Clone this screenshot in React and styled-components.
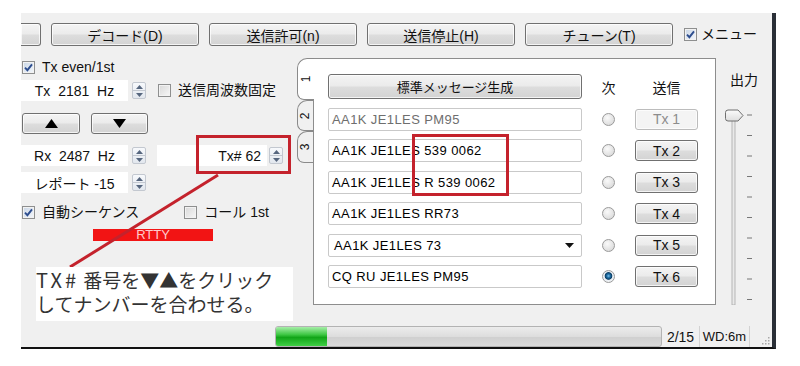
import React from "react";
import styled, { createGlobalStyle } from "styled-components";

const UI_FONT = `"Liberation Sans", "Noto Sans CJK JP", sans-serif`;

const GlobalStyle = createGlobalStyle`
  html, body { margin: 0; padding: 0; background: #fff; }
  body { font-family: ${UI_FONT}; font-size: 14px; color: #111; }
`;

const MESSAGES = [
  { text: "AA1K JE1LES PM95", tx: "Tx 1", dim: true },
  { text: "AA1K JE1LES 539 0062", tx: "Tx 2" },
  { text: "AA1K JE1LES R 539 0062", tx: "Tx 3" },
  { text: "AA1K JE1LES RR73", tx: "Tx 4" },
  { text: "AA1K JE1LES 73", tx: "Tx 5", combo: true },
  { text: "CQ RU JE1LES PM95", tx: "Tx 6", selected: true },
];

const PROGRESS = { value: 2, total: 15 };

// window frame
const Window = styled.div`
  position: relative;
  box-sizing: border-box;
  margin: 13px 0 0 21px;
  width: 755px;
  height: 336px;
  background: #f0f0f0;
  border-right: 4px solid #2a2f37;
  border-bottom: 2px solid #111;
  display: flex;
  flex-direction: column;
`;

const TopBar = styled.div`
  display: flex;
  align-items: center;
  gap: 10px;
  margin-top: 10px;
  height: 23px;
`;

const Button = styled.button`
  box-sizing: border-box;
  flex: none;
  width: ${(p) => p.$w ?? 148}px;
  height: ${(p) => p.$h ?? 23}px;
  padding: 0;
  border: 1px solid ${(p) => (p.disabled ? "#bcbcbc" : "#707070")};
  border-left-width: ${(p) => (p.$cut ? 0 : 1)}px;
  border-radius: ${(p) => (p.$cut ? "0 3px 3px 0" : "3px")};
  background: ${(p) =>
    p.disabled
      ? "#f4f4f4"
      : "linear-gradient(#f4f4f4, #ebebeb 48%, #dddddd 52%, #d3d3d3)"};
  box-shadow: inset 0 0 0 1px rgba(255, 255, 255, 0.75);
  font-family: ${UI_FONT};
  font-size: ${(p) => p.$fs ?? 14}px;
  color: ${(p) => (p.disabled ? "#8c8c8c" : "#111")};
  display: flex;
  align-items: center;
  justify-content: center;
  white-space: pre;
`;

const CheckLabel = styled.label`
  display: inline-flex;
  align-items: center;
  gap: ${(p) => p.$gap ?? 7}px;
  margin-left: ${(p) => p.$ml ?? 0}px;
  font-size: 14px;
  white-space: nowrap;
  line-height: 15px;
`;

const Box = styled.span`
  box-sizing: border-box;
  flex: none;
  width: 13px;
  height: 13px;
  border: 1px solid #8e8f8f;
  background: ${(p) =>
    p.$on
      ? "linear-gradient(135deg, #c9d6e6, #f4f7fb)"
      : "linear-gradient(135deg, #d8d8d8, #f7f7f7)"};
  box-shadow: inset 0 0 0 1px #f2f2f2;
  display: flex;
  align-items: center;
  justify-content: center;
`;

function Checkbox({ checked, children, gap, ml }) {
  return (
    <CheckLabel $gap={gap} $ml={ml}>
      <Box $on={checked}>
        {checked && (
          <svg width="9" height="9" viewBox="0 0 9 9">
            <path d="M1 4.6 L3.4 7.2 L8 1.4" fill="none" stroke="#2d4d8e" strokeWidth="1.9" />
          </svg>
        )}
      </Box>
      {children}
    </CheckLabel>
  );
}

const Main = styled.div`
  display: flex;
  margin-top: 12px;
  height: 247px;
`;

const LeftPanel = styled.div`
  width: 275px;
  flex: none;
  display: flex;
  flex-direction: column;
`;

const Row = styled.div`
  display: flex;
  align-items: center;
  height: ${(p) => p.$h}px;
  margin-top: ${(p) => p.$mt}px;
  padding-left: ${(p) => p.$pl ?? 0}px;
  gap: ${(p) => p.$gap ?? 0}px;
`;

const Field = styled.div`
  box-sizing: border-box;
  flex: none;
  width: ${(p) => p.$w}px;
  height: 21px;
  margin-left: ${(p) => p.$ml ?? 0}px;
  background: #fff;
  display: flex;
  align-items: center;
  justify-content: ${(p) => p.$align ?? "center"};
  padding: 0 6px;
  white-space: pre;
  font-size: 14px;
`;

const SpinBox = styled.span`
  box-sizing: border-box;
  flex: none;
  width: 14px;
  height: 17px;
  margin-left: ${(p) => p.$ml ?? 4}px;
  border: 1px solid #c3c8d0;
  border-radius: 2px;
  background: linear-gradient(#f7f9fc, #e2e7ee);
  display: flex;
  flex-direction: column;
`;

const SpinHalf = styled.span`
  flex: 1;
  display: flex;
  align-items: center;
  justify-content: center;
  & + & {
    border-top: 1px solid #c3c8d0;
  }
`;

function Spinner({ ml }) {
  return (
    <SpinBox $ml={ml}>
      <SpinHalf>
        <svg width="7" height="4" viewBox="0 0 7 4">
          <path d="M0 4 L3.5 0 L7 4Z" fill="#56667e" />
        </svg>
      </SpinHalf>
      <SpinHalf>
        <svg width="7" height="4" viewBox="0 0 7 4">
          <path d="M0 0 L3.5 4 L7 0Z" fill="#56667e" />
        </svg>
      </SpinHalf>
    </SpinBox>
  );
}

const ModeBar = styled.div`
  margin: 9px 0 0 72px;
  width: 120px;
  height: 12px;
  background: #f21414;
  color: #ffcaca;
  font-size: 13px;
  line-height: 12px;
  text-align: center;
`;

// vertical tabs
const TabStrip = styled.div`
  position: relative;
  z-index: 1;
  flex: none;
  width: 18px;
  margin-right: -1px;
  display: flex;
  flex-direction: column;
`;

const Tab = styled.div`
  box-sizing: border-box;
  height: ${(p) => p.$h}px;
  width: ${(p) => (p.$active ? 17 : 16)}px;
  margin-left: 1px;
  border: 1px solid #8a8a8a;
  border-right: none;
  border-radius: 10px 0 0 7px;
  background: ${(p) => (p.$active ? "#fff" : "#f0f0f0")};
  display: flex;
  align-items: center;
  justify-content: center;
  font-size: 12px;
  & > span {
    transform: rotate(-90deg);
  }
`;

const TabPanel = styled.div`
  box-sizing: border-box;
  flex: none;
  width: 403px;
  height: 247px;
  background: #fff;
  border: 1px solid #8d8d8d;
  padding: 15px 0 0 14px;
`;

const MsgGrid = styled.div`
  display: grid;
  grid-template-columns: 254px 53px 63px;
  grid-template-rows: 25px repeat(6, 23px);
  row-gap: 8.5px;
  align-items: center;
`;

const ColHead = styled.div`
  text-align: center;
  font-size: 14px;
`;

const MsgField = styled.div`
  box-sizing: border-box;
  height: 23px;
  border: 1px solid #c9c9c9;
  border-radius: 2px;
  display: flex;
  align-items: center;
  justify-content: space-between;
  padding: 0 7px 0 ${(p) => (p.$combo ? 5 : 3)}px;
  color: ${(p) => (p.$dim ? "#6e6e6e" : "#000")};
  font-size: 13px;
  letter-spacing: 0.4px;
  white-space: pre;
`;

const Radio = styled.span`
  justify-self: center;
  box-sizing: border-box;
  width: 13px;
  height: 13px;
  border-radius: 50%;
  border: 1px solid #9a9a9a;
  background: ${(p) =>
    p.$on
      ? "radial-gradient(circle at 50% 45%, #7cc0ea 0, #1f6ea5 1.8px, #0d3f66 3.4px, #e9eef3 4.2px, #f6f6f6)"
      : "radial-gradient(circle at 40% 35%, #fafafa, #d3d3d3)"};
`;

// output slider
const SliderArea = styled.div`
  width: 56px;
  flex: none;
  display: flex;
  flex-direction: column;
`;

const SliderLabel = styled.div`
  margin: 14px 0 0 14px;
  height: 16px;
  line-height: 16px;
  font-size: 14px;
`;

const StatusBar = styled.div`
  display: flex;
  height: 21px;
  margin-top: 21px;
  padding-left: 254px;
`;

const Progress = styled.div`
  box-sizing: border-box;
  width: 387px;
  height: 21px;
  border: 1px solid #b3b3b3;
  border-radius: 3px;
  background: linear-gradient(#ececec, #dddddd 50%, #cfcfcf 52%, #dadada);
  overflow: hidden;
`;

const ProgressFill = styled.div`
  height: 100%;
  background: linear-gradient(#a6eea8, #3ec743 40%, #12a518 55%, #3fd045);
`;

const StatusCell = styled.div`
  box-sizing: border-box;
  width: ${(p) => p.$w}px;
  border-right: 1px solid #d2d2d2;
  display: flex;
  align-items: center;
  justify-content: center;
  font-size: ${(p) => p.$fs ?? 14}px;
`;

const Grip = styled.div`
  flex: 1;
  display: flex;
  align-items: flex-end;
  justify-content: flex-end;
  padding: 0 2px 2px 0;
`;

// annotations drawn over the screenshot
const Marker = styled.div`
  position: absolute;
  box-sizing: border-box;
  left: ${(p) => p.$x}px;
  top: ${(p) => p.$y}px;
  width: ${(p) => p.$w}px;
  height: ${(p) => p.$h}px;
  border: 3px solid #c4222c;
  pointer-events: none;
`;

const LineLayer = styled.svg`
  position: absolute;
  left: 0;
  top: 0;
  width: 100%;
  height: 100%;
  pointer-events: none;
`;

const Callout = styled.div`
  position: absolute;
  left: 15px;
  top: 254px;
  box-sizing: border-box;
  width: 257px;
  height: 54px;
  padding-top: 1px;
  background: #fff;
  font-family: "Noto Sans CJK JP", sans-serif;
  font-size: 19px;
  line-height: 24px;
  color: #333;
  white-space: nowrap;
`;

const Wide = styled.span`
  font-size: 20px;
  letter-spacing: 3px;
`;

function Arrow({ up }) {
  return (
    <svg width="13" height="9" viewBox="0 0 13 9">
      <path d={up ? "M0 9 L6.5 0 L13 9Z" : "M0 0 L6.5 9 L13 0Z"} fill="#000" />
    </svg>
  );
}

function OutputSlider() {
  const ticks = Array.from({ length: 10 }, (_, i) => 27 + i * 20.5);
  return (
    <svg width="56" height="217" viewBox="0 0 56 217">
      <defs>
        <linearGradient id="thumb" x1="0" y1="0" x2="0" y2="1">
          <stop offset="0" stopColor="#fbfbfb" />
          <stop offset="1" stopColor="#dedede" />
        </linearGradient>
      </defs>
      <rect x="16" y="24" width="3" height="193" fill="#e9e9e9" stroke="#a9a9a9" strokeWidth="0.8" />
      {ticks.map((y) => (
        <line key={y} x1="31" x2="36" y1={y} y2={y} stroke="#777" strokeWidth="1" />
      ))}
      <path
        d="M12 22 H22 L27 27.5 L22 33 H12 Q9.5 33 9.5 30.5 V24.5 Q9.5 22 12 22 Z"
        fill="url(#thumb)"
        stroke="#6f6f6f"
        strokeWidth="1"
      />
    </svg>
  );
}

export default function App() {
  const pct = (PROGRESS.value / PROGRESS.total) * 100;

  return (
    <>
      <GlobalStyle />
      <Window>
        <TopBar>
          <Button $w={20} $cut />
          <Button>デコード(D)</Button>
          <Button>送信許可(n)</Button>
          <Button>送信停止(H)</Button>
          <Button>チューン(T)</Button>
          <Checkbox checked gap={4} ml={1}>
            メニュー
          </Checkbox>
        </TopBar>

        <Main>
          <LeftPanel>
            <Row $h={14} $mt={2} $pl={1}>
              <Checkbox checked>Tx even/1st</Checkbox>
            </Row>
            <Row $h={21} $mt={6}>
              <Field $w={107}>{"Tx  2181  Hz"}</Field>
              <Spinner />
              <Checkbox ml={12}>送信周波数固定</Checkbox>
            </Row>
            <Row $h={21} $mt={12} $pl={1} $gap={11}>
              <Button $w={58} $h={21}>
                <Arrow up />
              </Button>
              <Button $w={57} $h={21}>
                <Arrow />
              </Button>
            </Row>
            <Row $h={21} $mt={11}>
              <Field $w={107}>{"Rx  2487  Hz"}</Field>
              <Spinner />
              <Field $w={110} $ml={11} $align="flex-end">
                {"Tx# 62"}
              </Field>
              <Spinner ml={2} />
            </Row>
            <Row $h={21} $mt={6}>
              <Field $w={107}>{"レポート -15"}</Field>
              <Spinner />
            </Row>
            <Row $h={15} $mt={12} $pl={1}>
              <Checkbox checked>自動シーケンス</Checkbox>
              <Checkbox ml={45}>コール 1st</Checkbox>
            </Row>
            <ModeBar>RTTY</ModeBar>
          </LeftPanel>

          <TabStrip>
            <Tab $h={42} $active>
              <span>1</span>
            </Tab>
            <Tab $h={31}>
              <span>2</span>
            </Tab>
            <Tab $h={32}>
              <span>3</span>
            </Tab>
          </TabStrip>

          <TabPanel>
            <MsgGrid>
              <Button $w={254} $h={25} $fs={13}>
                標準メッセージ生成
              </Button>
              <ColHead>次</ColHead>
              <ColHead>送信</ColHead>
              {MESSAGES.map((m) => (
                <React.Fragment key={m.tx}>
                  <MsgField $dim={m.dim} $combo={m.combo}>
                    <span>{m.text}</span>
                    {m.combo && (
                      <svg width="9" height="5" viewBox="0 0 9 5">
                        <path d="M0 0 L4.5 5 L9 0Z" fill="#111" />
                      </svg>
                    )}
                  </MsgField>
                  <Radio $on={m.selected} />
                  <Button $w={63} $h={21} disabled={m.dim}>
                    {m.tx}
                  </Button>
                </React.Fragment>
              ))}
            </MsgGrid>
          </TabPanel>

          <SliderArea>
            <SliderLabel>出力</SliderLabel>
            <OutputSlider />
          </SliderArea>
        </Main>

        <StatusBar>
          <Progress>
            <ProgressFill style={{ width: `${pct}%` }} />
          </Progress>
          <StatusCell $w={38}>2/15</StatusCell>
          <StatusCell $w={50} $fs={13}>
            WD:6m
          </StatusCell>
          <Grip>
            <svg width="10" height="10" viewBox="0 0 10 10">
              {[
                [8, 2],
                [5, 5],
                [8, 5],
                [2, 8],
                [5, 8],
                [8, 8],
              ].map(([x, y]) => (
                <rect key={`${x}-${y}`} x={x} y={y} width="1.5" height="1.5" fill="#a8a8a8" />
              ))}
            </svg>
          </Grip>
        </StatusBar>

        <LineLayer>
          <line x1="197" y1="162" x2="49" y2="254" stroke="#c4222c" strokeWidth="3" />
        </LineLayer>
        <Marker $x={175} $y={122} $w={95} $h={39} />
        <Marker $x={391} $y={121} $w={97} $h={62} />
        <Callout>
          <Wide>TX#</Wide> 番号を▼▲をクリック
          <br />
          してナンバーを合わせる。
        </Callout>
      </Window>
    </>
  );
}
